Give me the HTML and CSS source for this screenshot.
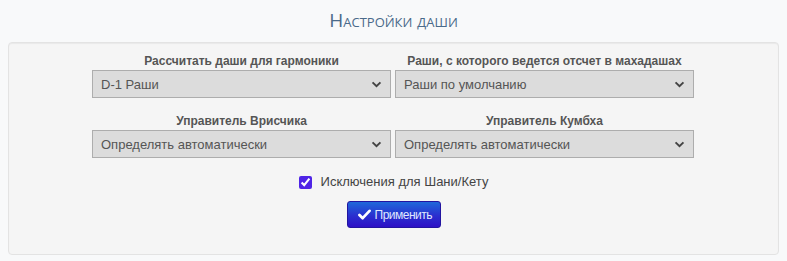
FILE: index.html
```html
<!DOCTYPE html>
<html lang="ru">
<head>
  <meta charset="UTF-8">
  <title>Настройки даши</title>
  <link rel="stylesheet" href="styles.css">
</head>
<body>
  <h3 class="title">Настройки даши</h3>

  <div class="well">
    <div class="grid">
      <div class="field">
        <label for="dasha-harm">Рассчитать даши для гармоники</label>
        <div class="select-wrap">
          <select id="dasha-harm">
            <option>D-1 Раши</option>
          </select>
          <svg class="chevron" viewBox="0 0 12 8"><path d="M1.5 1.5 L6 6 L10.5 1.5" /></svg>
        </div>
      </div>
      <div class="field">
        <label for="dasha-rashi">Раши, с которого ведется отсчет в махадашах</label>
        <div class="select-wrap">
          <select id="dasha-rashi">
            <option>Раши по умолчанию</option>
          </select>
          <svg class="chevron" viewBox="0 0 12 8"><path d="M1.5 1.5 L6 6 L10.5 1.5" /></svg>
        </div>
      </div>
      <div class="field">
        <label for="lord-vrish">Управитель Врисчика</label>
        <div class="select-wrap">
          <select id="lord-vrish">
            <option>Определять автоматически</option>
          </select>
          <svg class="chevron" viewBox="0 0 12 8"><path d="M1.5 1.5 L6 6 L10.5 1.5" /></svg>
        </div>
      </div>
      <div class="field">
        <label for="lord-kumbha">Управитель Кумбха</label>
        <div class="select-wrap">
          <select id="lord-kumbha">
            <option>Определять автоматически</option>
          </select>
          <svg class="chevron" viewBox="0 0 12 8"><path d="M1.5 1.5 L6 6 L10.5 1.5" /></svg>
        </div>
      </div>
    </div>

    <div class="check">
      <input type="checkbox" id="exceptions" checked>
      <label for="exceptions">Исключения для Шани/Кету</label>
    </div>

    <div class="actions">
      <button class="btn-apply" type="button">
        <svg class="tick" viewBox="0 0 14 12"><path d="M1.5 6.5 L5 10 L12.5 2" /></svg>
        Применить
      </button>
    </div>
  </div>
</body>
</html>
```

FILE: styles.css
```css
/* Page */
body {
  margin: 0;
  padding: 0 8px;
  background-color: #f8f9fa;
  font-family: "Liberation Sans", Arial, sans-serif;
  font-size: 13px;
  color: #555;
}

/* Title */
.title {
  margin: 0;
  padding: 8px 0 10px;
  text-align: center;
  font-family: "Open Sans", sans-serif;
  font-variant: small-caps;
  font-weight: normal;
  font-size: 19px;
  line-height: 24px;
  color: #4a6a8a;
}

/* Panel */
.well {
  background-color: #f5f5f5;
  border: 1px solid #e3e3e3;
  border-radius: 4px;
  box-shadow: inset 0 1px 1px rgba(0,0,0,0.05);
  padding: 9px 0 26px;
  min-height: 176px;
  box-sizing: border-box;
}

/* Selects grid */
.grid {
  width: 603px;
  margin: 0 auto;
  display: grid;
  grid-template-columns: 299px 299px;
  column-gap: 4px;
  row-gap: 14px;
}
.field {
  display: flex;
  flex-direction: column;
  align-items: stretch;
}
.field label {
  text-align: center;
  font-weight: bold;
  font-size: 12px;
  line-height: 18px;
  color: #555;
}
.select-wrap {
  position: relative;
}
.select-wrap select {
  appearance: none;
  -webkit-appearance: none;
  width: 100%;
  height: 28px;
  margin: 0;
  padding: 0 24px 0 8px;
  border: 1px solid #adadad;
  border-radius: 0;
  background-color: #dcdcdc;
  font-family: "Liberation Sans", Arial, sans-serif;
  font-size: 13px;
  color: #555;
  outline: none;
}
.chevron {
  position: absolute;
  right: 9px;
  top: 11px;
  width: 11px;
  height: 7px;
  fill: none;
  stroke: #444;
  stroke-width: 2.2;
  pointer-events: none;
}

/* Checkbox */
.check {
  display: flex;
  justify-content: center;
  align-items: center;
  gap: 9px;
  margin-top: 16px;
}
.check input {
  margin: 0;
  width: 13px;
  height: 13px;
  accent-color: #4f24e6;
}
.check label {
  font-size: 13px;
  color: #444;
  line-height: 16px;
}

/* Button */
.actions {
  display: flex;
  justify-content: center;
  margin-top: 11px;
}
.btn-apply {
  display: flex;
  align-items: center;
  gap: 4px;
  height: 27px;
  width: 94px;
  padding: 0 0 0 10px;
  border: 1px solid #2214a0;
  border-radius: 3px;
  background-image: linear-gradient(180deg, #1f68da 0%, #2a2fcf 55%, #2d10c6 100%);
  color: #dfe8ff;
  font-family: "Liberation Sans", Arial, sans-serif;
  font-size: 12px;
  letter-spacing: -0.5px;
  cursor: pointer;
}
.tick {
  width: 13px;
  height: 11px;
  fill: none;
  stroke: #fff;
  stroke-width: 3;
  stroke-linecap: round;
  stroke-linejoin: round;
}
```
